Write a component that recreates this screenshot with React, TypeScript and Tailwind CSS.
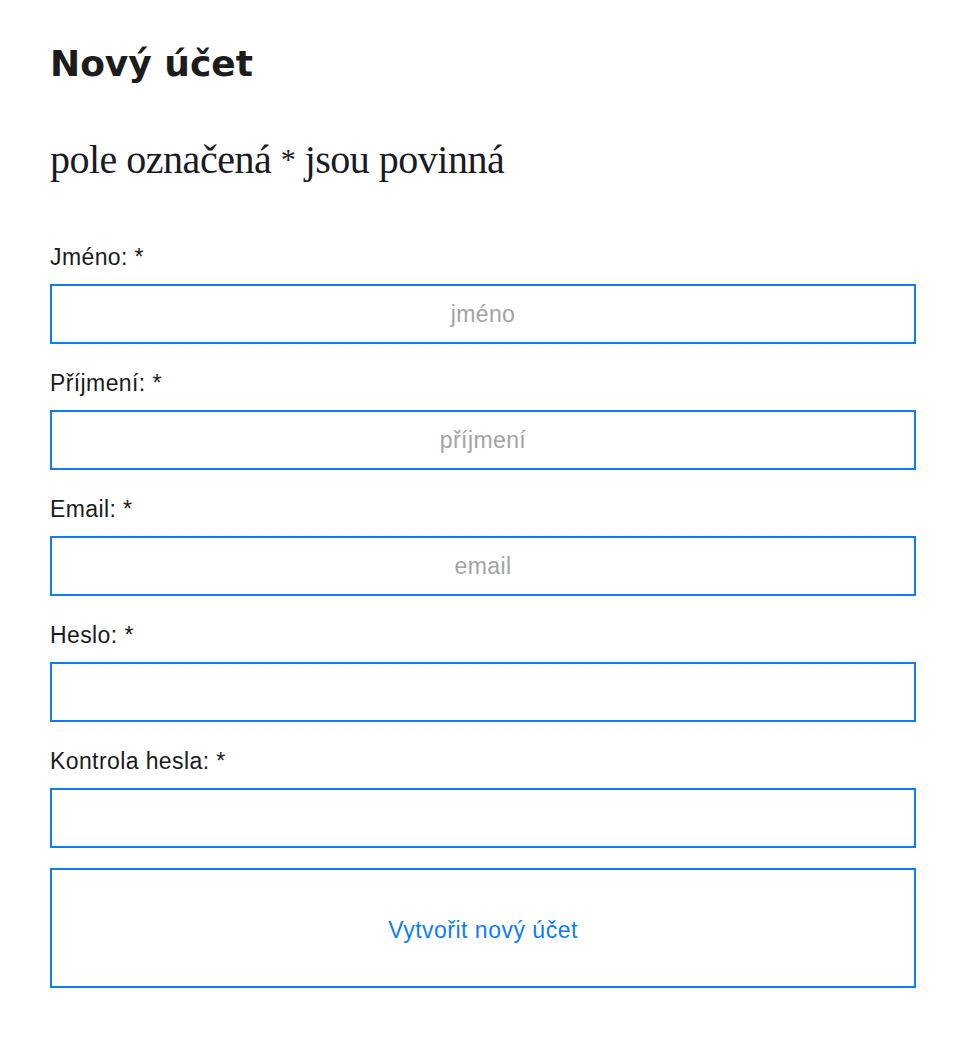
import React from "react";

const fields = [
  { label: "Jméno: *", placeholder: "jméno", type: "text" },
  { label: "Příjmení: *", placeholder: "příjmení", type: "text" },
  { label: "Email: *", placeholder: "email", type: "email" },
  { label: "Heslo: *", placeholder: "", type: "password" },
  { label: "Kontrola hesla: *", placeholder: "", type: "password" },
];

export default function App() {
  return (
    <div className="min-h-screen bg-white">
      <div className="w-[866px] ml-[50px] pt-[42px] pb-[62px]">
        <h1 className="text-[36px] leading-[44px] font-bold text-[#1c1c1c] [font-family:'DejaVu_Sans',sans-serif]">
          Nový účet
        </h1>
        <p className="mt-[52px] h-[44px] text-[40px] leading-[44px] text-[#1a1a26] tracking-[-0.5px] [font-family:'Liberation_Serif',serif]">
          pole označená <span className="text-[30px] leading-[0] align-[4px]">*</span> jsou povinná
        </p>
        <form className="mt-[62px] flex flex-col [font-family:'Liberation_Sans',Arial,sans-serif]">
          {fields.map((f, i) => (
            <div key={i} className={i === 0 ? "" : "mt-[26px]"}>
              <label className="block text-[23px] leading-[26px] tracking-[0.4px] text-[#1a1a1a] mb-[14px]">
                {f.label}
              </label>
              <input
                type={f.type}
                placeholder={f.placeholder}
                className="block w-full h-[60px] border-2 border-[#0f7cf7] bg-white text-center text-[23px] tracking-[0.4px] text-[#1a1a1a] placeholder:text-[#a3a3a3] outline-none"
              />
            </div>
          ))}
          <button
            type="button"
            className="mt-[20px] w-full h-[120px] pt-[4px] border-2 border-[#0f7cf7] bg-white text-[23px] tracking-[0.5px] text-[#0f7cf7]"
          >
            Vytvořit nový účet
          </button>
        </form>
      </div>
    </div>
  );
}
